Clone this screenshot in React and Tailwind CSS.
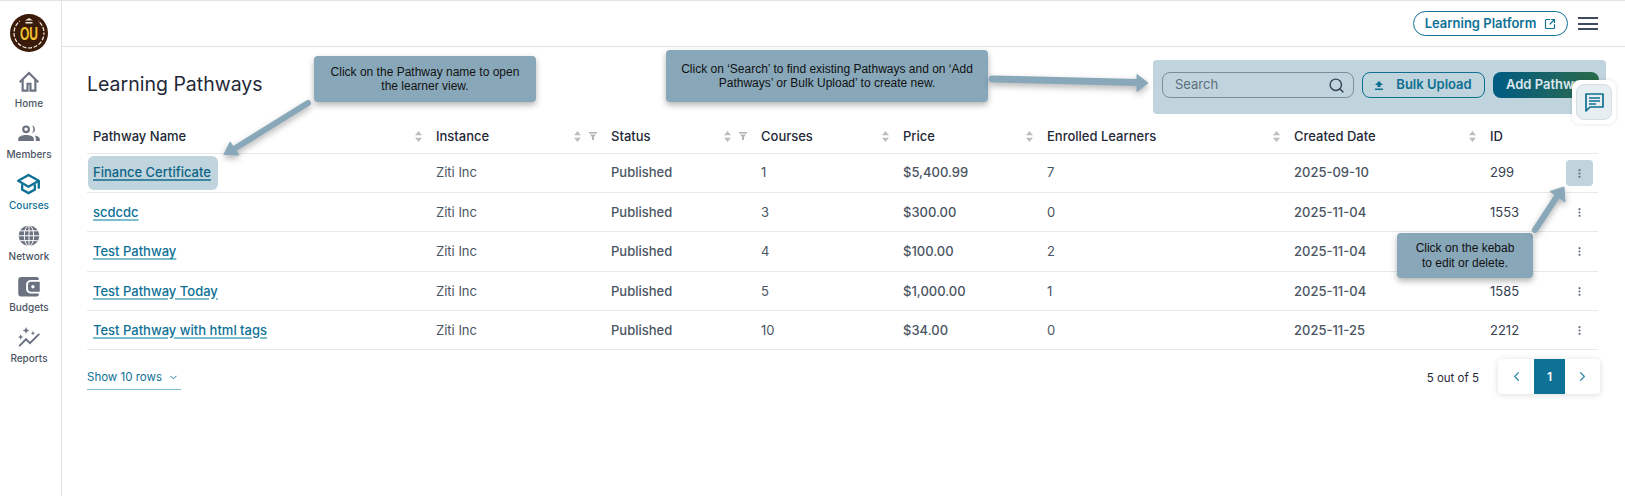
import { ChevronDown, ChevronLeft, ChevronRight, Search, SquareArrowOutUpRight } from "lucide-react";

const rows = [
  { name: "Finance Certificate", courses: "1", price: "$5,400.99", learners: "7", date: "2025-09-10", id: "299", active: true },
  { name: "scdcdc", courses: "3", price: "$300.00", learners: "0", date: "2025-11-04", id: "1553" },
  { name: "Test Pathway", courses: "4", price: "$100.00", learners: "2", date: "2025-11-04", id: "" }, // id sits under the kebab callout
  { name: "Test Pathway Today", courses: "5", price: "$1,000.00", learners: "1", date: "2025-11-04", id: "1585" },
  { name: "Test Pathway with html tags", courses: "10", price: "$34.00", learners: "0", date: "2025-11-25", id: "2212" },
];

const heads = [
  { label: "Pathway Name", sort: true },
  { label: "Instance", sort: true, filter: true },
  { label: "Status", sort: true, filter: true },
  { label: "Courses", sort: true },
  { label: "Price", sort: true },
  { label: "Enrolled Learners", sort: true },
  { label: "Created Date", sort: true },
  { label: "ID" },
];

const HomeIcon = () => (
  <svg width="24" height="24" viewBox="0 0 24 24" fill="none" stroke="currentColor" strokeWidth="2.2">
    <path d="M2.5 12.5 12 3l9.5 9.5" />
    <path d="M5.5 10v11h5v-7h3v7h5V10" />
  </svg>
);

const MembersIcon = () => (
  <svg width="24" height="24" viewBox="0 0 24 24" fill="currentColor">
    <path fillRule="evenodd" d="M9 4.500a4 4 0 1 1 0 8 4 4 0 0 1 0-8Zm0 2.200a1.800 1.800 0 1 0 0 3.600 1.800 1.800 0 0 0 0-3.600Z" />
    <path d="M15 4.600a4 4 0 0 1 0 7.800c.9-1.100 1.500-2.400 1.500-3.900S15.900 5.700 15 4.600Z" />
    <path d="M1 20.500v-2.200c0-2.500 4.400-4 8-4s8 1.500 8 4v2.200H1Z" />
    <path d="M18 14.800c2.800.5 5 1.600 5 3.500v2.200h-4v-2.500c0-1.300-.4-2.300-1-3.200Z" />
  </svg>
);

const CapIcon = () => (
  <svg width="25" height="24" viewBox="0 0 25 24" fill="none" stroke="currentColor" strokeWidth="2.4">
    <path d="M12.500 3 23 9l-10.500 6L2 9l10.500-6Z" strokeLinejoin="round" />
    <path d="M6 12.500v5.500l6.500 3.500 6.500-3.500v-5.500" />
    <path d="M23 9v8" />
  </svg>
);

const GlobeIcon = () => (
  <svg width="24" height="24" viewBox="0 0 24 24">
    <circle cx="12" cy="12" r="10.500" fill="currentColor" />
    <g fill="none" stroke="#fff" strokeWidth="1">
      <ellipse cx="12" cy="12" rx="4.800" ry="10.500" />
      <path d="M12 1.500v21M1.500 12h21M3 7h18M3 17h18" />
    </g>
  </svg>
);

const WalletIcon = () => (
  <svg width="24" height="24" viewBox="0 0 24 24" fill="currentColor">
    <path d="M4 2h16a2 2 0 0 1 2 2v1h-8a5 5 0 0 0-5 5v4a5 5 0 0 0 5 5h8v1a2 2 0 0 1-2 2H4a3 3 0 0 1-3-3V5a3 3 0 0 1 3-3Z" />
    <path fillRule="evenodd" d="M14 7h9v10h-9a3 3 0 0 1-3-3v-4a3 3 0 0 1 3-3Zm2 3.300a1.700 1.700 0 1 0 0 3.400 1.700 1.700 0 0 0 0-3.400Z" />
  </svg>
);

const ReportsIcon = () => (
  <svg width="24" height="24" viewBox="0 0 24 24" fill="none">
    <path d="M2 20.500 9 13.500l4 4 9.500-9.500" stroke="currentColor" strokeWidth="2" />
    <path fill="currentColor" d="M9 1l1 2.500 2.500 1L10 5.500 9 8 8 5.500l-2.500-1L8 3.500ZM3.500 8.500l.8 2 2 .8-2 .8-.8 2-.8-2-2-.8 2-.8ZM16 5l.7 1.600 1.600.7-1.600.7-.7 1.600-.7-1.600-1.600-.7 1.600-.7Z" />
  </svg>
);

const navItems = [
  { label: "Home", icon: HomeIcon },
  { label: "Members", icon: MembersIcon },
  { label: "Courses", icon: CapIcon, active: true },
  { label: "Network", icon: GlobeIcon },
  { label: "Budgets", icon: WalletIcon },
  { label: "Reports", icon: ReportsIcon },
];

const SortIcon = () => (
  <svg width="7" height="11" viewBox="0 0 7 11" fill="#bdbdbd" className="shrink-0">
    <path d="M3.500 0 7 4.200H0ZM0 6.800h7L3.500 11Z" />
  </svg>
);

const FilterIcon = () => (
  <svg width="8" height="8" viewBox="0 0 8 8" fill="#b4b4b4" className="shrink-0">
    <path d="M0 0h8v1.500H0ZM1 2.500h6L5 5v3H3V5Z" />
  </svg>
);

const Kebab = () => (
  <svg width="3" height="9" viewBox="0 0 3 9" fill="#6b7280">
    <circle cx="1.500" cy="1.200" r="1.100" />
    <circle cx="1.500" cy="4.500" r="1.100" />
    <circle cx="1.500" cy="7.800" r="1.100" />
  </svg>
);

const Logo = () => (
  <svg width="38" height="38" viewBox="0 0 38 38" className="font-['Liberation_Sans',Arial,sans-serif]">
    <circle cx="19" cy="19" r="19" fill="#3a1a08" />
    <circle cx="19" cy="19" r="15" fill="none" stroke="#f4efe6" strokeWidth="1.200" strokeDasharray="4 1.600" strokeDashoffset="2" />
    <rect x="10" y="3" width="18" height="8" fill="#3a1a08" />
    <path d="M19 4 23 6.500H15ZM15.500 8h7v1.500h-7Z" fill="#eee6d8" />
    <text x="19" y="26" textAnchor="middle" fontSize="19" fontWeight="700" fill="#f2c230" textLength="18" lengthAdjust="spacingAndGlyphs">OU</text>
  </svg>
);

function Callout({ className, children }) {
  return (
    <div className={`absolute flex items-center justify-center rounded bg-[#88a8ba] text-center font-['Liberation_Sans',Arial,sans-serif] text-[12px] leading-[14.5px] text-[#111] shadow-[0_3px_6px_rgba(0,0,0,0.3)] ${className}`}>
      <p>{children}</p>
    </div>
  );
}

export default function App() {
  return (
    <div className="relative flex h-screen overflow-hidden border-t border-[#e2e2e2] bg-white font-['Inter',sans-serif] text-[13px] text-[#4b5563]">
      {/* Sidebar */}
      <aside className="flex w-[62px] shrink-0 flex-col items-center border-r border-[#e2e2e2] pt-[13px] pr-[3px]">
        <Logo />
        <nav className="mt-[18px] flex flex-col items-center gap-[11.7px]">
          {navItems.map(({ label, icon: Icon, active }) => (
            <div key={label} className={`flex h-[39.5px] flex-col items-center ${active ? "text-[#0e7196]" : "text-[#6b7280]"}`}>
              <Icon />
              <span className={`mt-[3px] text-[10px] leading-[13px] font-medium whitespace-nowrap ${active ? "text-[#0e7196]" : "text-[#4b5563]"}`}>{label}</span>
            </div>
          ))}
        </nav>
      </aside>

      <main className="min-w-0 flex-1">
        {/* Top bar */}
        <header className="flex h-[46px] items-center justify-end gap-[10px] border-b border-[#e2e2e2] pr-[27px]">
          <button className="flex h-[25px] w-[155px] items-center justify-center gap-[8px] rounded-full border border-[#0e7196] text-[13px] font-semibold text-[#0e7196]">
            Learning Platform
            <SquareArrowOutUpRight size={12} strokeWidth={2.25} />
          </button>
          <div className="flex w-[20px] flex-col gap-[3.5px]">
            <span className="h-[2px] bg-[#3f4a5a]" />
            <span className="h-[2px] bg-[#3f4a5a]" />
            <span className="h-[2px] bg-[#3f4a5a]" />
          </div>
        </header>

        <section className="pr-[27px] pl-[25px]">
          {/* Title and actions */}
          <div className="flex items-center justify-between pt-[13px]">
            <h1 className="mb-[6px] text-[19.5px] leading-[28px] font-normal text-[#1f2937]">Learning Pathways</h1>
            <div className="-mr-[8px] flex h-[54px] w-[453px] items-start gap-[8px] rounded bg-[#c0d4de] pt-[12px] pl-[9px]">
              <div className="flex h-[26px] w-[192px] items-center justify-between rounded-lg border border-[#7d8c99] pr-[8px] pl-[12px] text-[13px] text-[#5f6f7c]">
                Search
                <Search size={17} strokeWidth={2} className="text-[#374151]" />
              </div>
              <button className="flex h-[26px] w-[123px] items-center justify-center gap-[13px] rounded-lg border border-[#0e6f90] text-[13px] font-semibold text-[#0e6f90]">
                <svg width="8" height="9" viewBox="0 0 8 9" fill="currentColor">
                  <path d="M4 0 8 4H5.500v2h-3V4H0ZM0 7.500h8V9H0Z" />
                </svg>
                Bulk Upload
              </button>
              <button className="h-[26px] w-[106px] rounded-lg bg-gradient-to-r from-[#005b82] to-[#2a6a4a] pl-[13px] text-left text-[13px] font-semibold whitespace-nowrap text-[#dce8ee]">
                Add Pathways
              </button>
            </div>
          </div>

          {/* Table */}
          <table className="mt-[5px] w-full table-fixed border-collapse">
            <colgroup>
              <col className="w-[343px]" />
              <col className="w-[175px]" />
              <col className="w-[150px]" />
              <col className="w-[142px]" />
              <col className="w-[144px]" />
              <col className="w-[247px]" />
              <col className="w-[196px]" />
              <col className="w-[114px]" />
            </colgroup>
            <thead>
              <tr className="h-[34px] border-b border-[#e9e9e9] text-[#1f2937]">
                {heads.map((h) => (
                  <th key={h.label} className="px-[6px] pt-px text-left font-medium">
                    <div className="flex items-center justify-between">
                      <span>{h.label}</span>
                      {h.sort && (
                        <span className="mr-[2px] flex items-center gap-[8px]">
                          <SortIcon />
                          {h.filter && <FilterIcon />}
                        </span>
                      )}
                    </div>
                  </th>
                ))}
              </tr>
            </thead>
            <tbody>
              {rows.map((r) => (
                <tr key={r.name} className="h-[39.4px] border-b border-[#e9e9e9]">
                  <td className="px-[6px] pt-px">
                    {r.active ? (
                      <span className="-ml-[5px] inline-flex h-[34px] items-center rounded-md bg-[#c0d4de] pr-[7px] pl-[5px]">
                        <a className="font-medium text-[#0b6485] underline decoration-[#3f86a3] decoration-[1.5px] underline-offset-2">{r.name}</a>
                      </span>
                    ) : (
                      <a className="font-medium text-[#0e7196] underline decoration-[#7fbccc] decoration-[1.5px] underline-offset-2">{r.name}</a>
                    )}
                  </td>
                  <td className="px-[6px] pt-px">Ziti Inc</td>
                  <td className="px-[6px] pt-px font-medium">Published</td>
                  <td className="px-[6px] pt-px">{r.courses}</td>
                  <td className="px-[6px] pt-px font-medium">{r.price}</td>
                  <td className="px-[6px] pt-px">{r.learners}</td>
                  <td className="px-[6px] pt-px font-medium">{r.date}</td>
                  <td className="px-[6px] pt-px">
                    <div className="flex items-center justify-between">
                      <span className="text-[#374151]">{r.id}</span>
                      <span className={`-mr-[1px] flex h-[26px] w-[27px] items-center justify-center rounded ${r.active ? "bg-[#c0d4de]" : ""}`}>
                        <Kebab />
                      </span>
                    </div>
                  </td>
                </tr>
              ))}
            </tbody>
          </table>

          {/* Footer */}
          <div className="mt-[9px] flex items-start justify-between">
            <div className="mt-[3px] flex h-[28px] w-[94px] items-center justify-between border-b border-[#7fbccc] pt-[3px] pr-[2px] text-[11.5px] whitespace-nowrap text-[#0e7196]">
              Show 10 rows
              <ChevronDown size={11} strokeWidth={2} className="shrink-0" />
            </div>
            <div className="flex items-center gap-[19px]">
              <span className="mt-[3px] text-[11.5px] text-[#1f2937]">5 out of 5</span>
              <div className="-mr-[2px] flex h-[35px] w-[102px] overflow-hidden rounded bg-white shadow-[0_1px_6px_rgba(0,0,0,0.14)]">
                <span className="flex w-[36px] items-center justify-center text-[#3a8db0]"><ChevronLeft size={15} /></span>
                <span className="flex w-[31px] items-center justify-center bg-[#0e7196] text-[12px] font-semibold text-white">1</span>
                <span className="flex w-[35px] items-center justify-center text-[#3a8db0]"><ChevronRight size={15} /></span>
              </div>
            </div>
          </div>
        </section>
      </main>

      {/* Tour annotations */}
      <Callout className="top-[55px] left-[314px] h-[46px] w-[222px] px-[12px]">Click on the Pathway name to open the learner view.</Callout>
      <Callout className="top-[49px] left-[666px] h-[52px] w-[322px] px-[14px]">Click on ‘Search’ to find existing Pathways and on ‘Add Pathways’ or Bulk Upload’ to create new.</Callout>
      <Callout className="top-[232px] left-[1397px] h-[45px] w-[136px] px-[18px]">Click on the kebab to edit or delete.</Callout>

      <svg className="pointer-events-none absolute top-0 left-0 drop-shadow-[0_3px_3px_rgba(0,0,0,0.3)]" width="1625" height="495" viewBox="0 0 1625 495">
        <g fill="#88a8ba" stroke="#88a8ba">
          <path d="M308 102 234 148" strokeWidth="6" strokeLinecap="round" />
          <path d="M224 153.500 230 141 239 154Z" strokeWidth="1" strokeLinejoin="round" />
          <path d="M992 78 1138 81.500" strokeWidth="7" strokeLinecap="round" />
          <path d="M1148 82 1137 73.500V90.500Z" strokeWidth="1" strokeLinejoin="round" />
          <path d="M1535 229 1556 197" strokeWidth="6" strokeLinecap="round" />
          <path d="M1564 186 1550 190.500 1565 201Z" strokeWidth="1" strokeLinejoin="round" />
        </g>
      </svg>

      {/* Chat button */}
      <div className="absolute top-[79px] left-[1572px] flex h-[44px] w-[44px] items-center justify-center rounded-lg bg-white shadow-[0_0_4px_rgba(0,0,0,0.12)]">
        <div className="flex h-[36px] w-[36px] items-center justify-center rounded-lg border border-[#d5dde2] bg-[#e6eef2]">
          <svg width="19" height="19" viewBox="0 0 19 19" fill="none" stroke="#0e6f90" strokeWidth="1.7">
            <path d="M1 1h17v13H5l-4 4V1Z" strokeLinejoin="round" />
            <path d="M4 5h11M4 8h11M4 11h7" />
          </svg>
        </div>
      </div>
    </div>
  );
}
